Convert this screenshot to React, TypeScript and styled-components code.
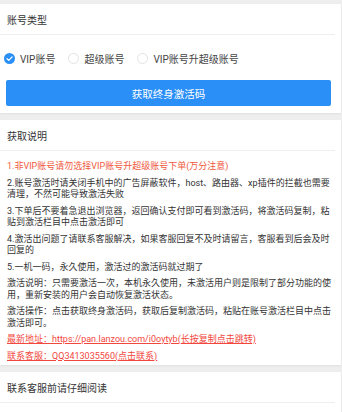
import styled, { createGlobalStyle } from "styled-components";

const GlobalStyle = createGlobalStyle`
  html, body {
    margin: 0;
    padding: 0;
    background: #eeeeee;
    font-family: Roboto, "Noto Sans CJK SC", sans-serif;
  }
`;

const accountTypes = ["VIP账号", "超级账号", "VIP账号升超级账号"];

const notes = [
  "2.账号激活时请关闭手机中的广告屏蔽软件，host、路由器、xp插件的拦截也需要清理，不然可能导致激活失败",
  "3.下单后不要着急退出浏览器，返回确认支付即可看到激活码，将激活码复制，粘贴到激活栏目中点击激活即可",
  "4.激活出问题了请联系客服解决，如果客服回复不及时请留言，客服看到后会及时回复的",
  "5.一机一码，永久使用，激活过的激活码就过期了",
  "激活说明：只需要激活一次，本机永久使用，未激活用户则是限制了部分功能的使用，重新安装的用户会自动恢复激活状态。",
  "激活操作：点击获取终身激活码，获取后复制激活码，粘贴在账号激活栏目中点击激活即可。",
];

function RadioMark({ checked }: { checked: boolean }) {
  if (!checked) return <EmptyCircle />;
  return (
    <svg width="11" height="11" viewBox="0 0 11 11">
      <circle cx="5.5" cy="5.5" r="5.5" fill="#2a8ff7" />
      <path
        d="M3 5.7 L4.8 7.4 L8.1 3.9"
        fill="none"
        stroke="#fff"
        strokeWidth="1.3"
        strokeLinecap="round"
        strokeLinejoin="round"
      />
    </svg>
  );
}

export default function App() {
  const selected = 0;

  return (
    <Page>
      <GlobalStyle />

      <Card>
        <CardHeader>账号类型</CardHeader>
        <TypeBody>
          <RadioGroup>
            {accountTypes.map((label, i) => (
              <RadioItem key={label}>
                <RadioMark checked={i === selected} />
                <span>{label}</span>
              </RadioItem>
            ))}
          </RadioGroup>
          <BuyButton>获取终身激活码</BuyButton>
        </TypeBody>
      </Card>

      <Card>
        <CardHeader>获取说明</CardHeader>
        <NoteBody>
          <Note $tone="warn">1.非VIP账号请勿选择VIP账号升超级账号下单(万分注意)</Note>
          {notes.map((text) => (
            <Note key={text}>{text}</Note>
          ))}
          <Note $tone="link">最新地址：https://pan.lanzou.com/i0oytyb(长按复制点击跳转)</Note>
          <Note $tone="link">联系客服：QQ3413035560(点击联系)</Note>
        </NoteBody>
      </Card>

      <Card>
        <CardHeader>联系客服前请仔细阅读</CardHeader>
        <NoteBody />
      </Card>
    </Page>
  );
}

const Page = styled.div`
  display: flex;
  flex-direction: column;
  gap: 7px;
  padding: 4px 1px 20px 0;
`;

const Card = styled.section`
  background: #fff;
  box-shadow: 0 1px 2px rgba(0, 0, 0, 0.06);
`;

const CardHeader = styled.div`
  height: 30px;
  display: flex;
  align-items: center;
  padding: 0 7px;
  margin-right: 6px;
  border-bottom: 1px solid #eeeeee;
  font-size: 10px;
  color: #333;
`;

const TypeBody = styled.div`
  display: flex;
  flex-direction: column;
  gap: 12px;
  padding: 13px 10px 7px 4px;
`;

const RadioGroup = styled.div`
  display: flex;
  align-items: center;
  gap: 13px;
  height: 20px;
`;

const RadioItem = styled.label`
  display: flex;
  align-items: center;
  gap: 5px;
  font-size: 10px;
  color: #444;
`;

const EmptyCircle = styled.span`
  width: 11px;
  height: 11px;
  box-sizing: border-box;
  border-radius: 50%;
  border: 1px solid #e2e2e2;
  background: #fff;
`;

const BuyButton = styled.button`
  margin-left: 2px;
  height: 26px;
  border: none;
  border-radius: 2px;
  background: #2a8ff7;
  color: #fff;
  font-family: inherit;
  font-size: 10.5px;
  cursor: pointer;
`;

const NoteBody = styled.div`
  display: flex;
  flex-direction: column;
  gap: 5px;
  padding: 10px 7px 3px 7px;
  min-height: 30px;
`;

const Note = styled.p<{ $tone?: "warn" | "link" }>`
  margin: 0;
  font-size: 9px;
  line-height: 11.5px;
  color: ${(p) => (p.$tone === "warn" ? "#f0583c" : p.$tone === "link" ? "#f2473d" : "#333")};
  text-decoration: ${(p) => (p.$tone === "link" ? "underline" : "none")};
`;
